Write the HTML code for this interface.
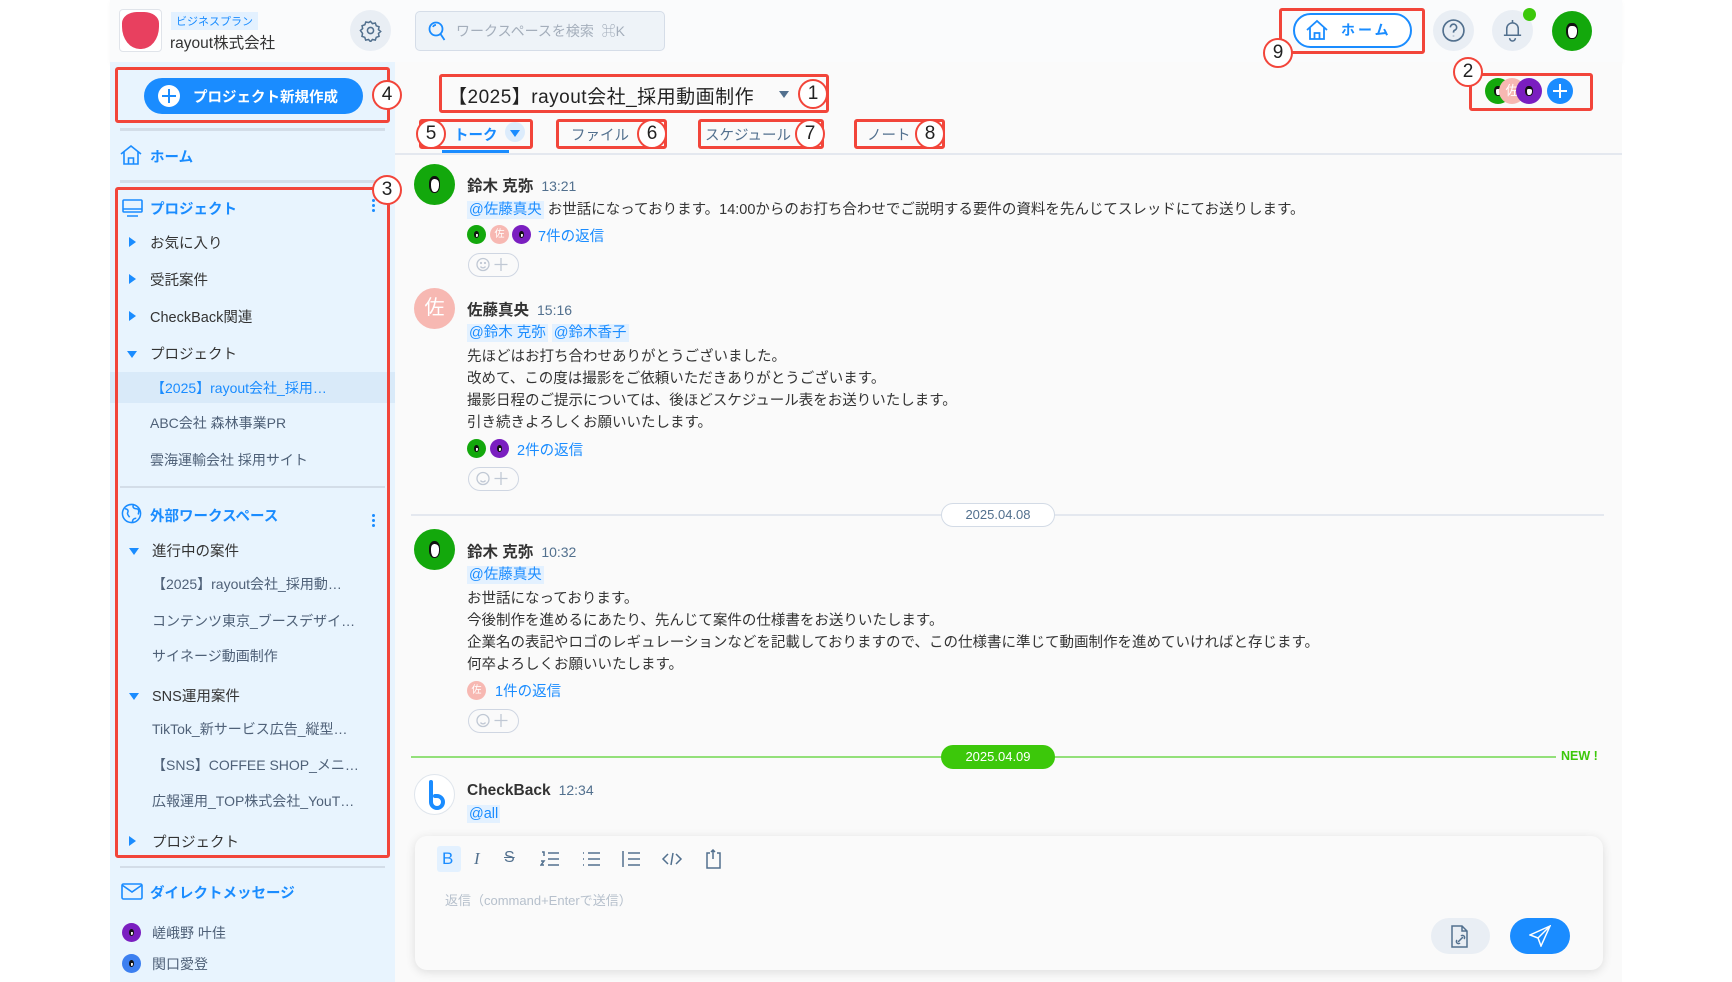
<!DOCTYPE html>
<html><head><meta charset="utf-8"><style>
*{box-sizing:border-box;margin:0;padding:0}
body{width:1732px;height:982px;background:#fff;font-family:"Liberation Sans","Noto Sans CJK JP",sans-serif;position:relative;overflow:hidden;color:#333}
.a{position:absolute;white-space:nowrap}
.red{position:absolute;border:3px solid #f2453a;border-radius:3px}
.num{position:absolute;width:30px;height:30px;border:2.5px solid #f2453a;border-radius:50%;background:#fff;font-size:19px;line-height:25px;text-align:center;color:#222}
.side{font-size:14.5px}
.grp{color:#333;font-size:14.5px}
.sub{color:#4f6178;font-size:14px}
.tri{position:absolute;width:0;height:0}
.tr{border-top:5px solid transparent;border-bottom:5px solid transparent;border-left:7px solid #1a8cff}
.td{border-left:5px solid transparent;border-right:5px solid transparent;border-top:7px solid #1a8cff}
.av{position:absolute;border-radius:50%}
.g{background:#13a80c}
.p{background:#f7b8b2;color:#fff;text-align:center}
.v{background:#7a1ec0}
.face{position:absolute;left:36%;top:30%;width:28%;height:40%;background:#fff;border-radius:45%;border:1px solid #111;border-top:3px solid #111;border-left:2px solid #111}
.name{font-weight:bold;font-size:15.5px;color:#333}
.time{font-size:14px;color:#52708e;margin-left:8px;font-weight:normal}
.txt{font-size:14.5px;color:#333}
.men{background:#e3f1ff;color:#1a8cff;padding:1px 2px}
.link{color:#1a8cff;font-size:14.5px}
.react{position:absolute;width:51px;height:24px;border:1.5px solid #cfd6e2;border-radius:12px}
.ic{position:absolute}
</style></head><body>
<div class="a" style="left:110px;top:0;width:1512px;height:62px;background:#fafbfc;box-shadow:0 2px 4px rgba(0,0,0,.04)"></div>
<div class="a" style="left:110px;top:62px;width:285px;height:920px;background:#e8f4fe"></div>
<div class="a" style="left:395px;top:62px;width:1227px;height:920px;background:#fafafa"></div>

<div class="a" style="left:119px;top:9px;width:43px;height:43px;border:1px solid #e0e4ea;border-radius:4px;background:#fff"></div>
<div class="a" style="left:122px;top:12px;width:37px;height:37px;background:#e8405f;border-radius:40% 40% 48% 48%/30% 30% 60% 60%"></div>
<div class="a" style="left:171px;top:12px;background:#e3f1ff;color:#1a8cff;font-size:11px;padding:1px 5px">ビジネスプラン</div>
<div class="a" style="left:170px;top:31px;font-size:15.5px;color:#333">rayout株式会社</div>
<div class="a" style="left:350px;top:10px;width:41px;height:41px;border-radius:50%;background:#e9eef4"></div>
<svg class="ic" style="left:359px;top:19px" width="23" height="23" viewBox="0 0 24 24" fill="none" stroke="#52708e" stroke-width="1.6"><circle cx="12" cy="12" r="3.2"/><path d="M12 2.5l2 2.3 3-.6 1 2.9 2.9 1-.6 3 2.3 2-2.3 2 .6 3-2.9 1-1 2.9-3-.6-2 2.3-2-2.3-3 .6-1-2.9-2.9-1 .6-3L1.5 12l2.3-2-.6-3 2.9-1 1-2.9 3 .6z"/></svg>
<div class="a" style="left:415px;top:11px;width:250px;height:40px;border:1px solid #d5dde8;border-radius:5px;background:#eef3f8"></div>
<svg class="ic" style="left:427px;top:20px" width="20" height="22" viewBox="0 0 20 22" fill="none" stroke="#1a8cff" stroke-width="1.8"><circle cx="9" cy="9" r="6.5"/><path d="M13.5 14l4 6"/><path d="M6 7a3 3 0 0 1 3-2"/></svg>
<div class="a" style="left:456px;top:21px;font-size:14px;color:#a4aebb">ワークスペースを検索 &nbsp;⌘K</div>

<div class="a" style="left:1293px;top:13px;width:119px;height:35px;border:2px solid #1a8cff;border-radius:18px;background:#fff"></div>
<svg class="ic" style="left:1305px;top:19px" width="24" height="22" viewBox="0 0 24 22" fill="none" stroke="#1a8cff" stroke-width="1.8"><path d="M2 11L12 2l10 9M5 8.5V20h14V8.5M9.5 20v-6h5v6"/></svg>
<div class="a" style="left:1341px;top:20px;font-size:14px;color:#1a8cff;font-weight:bold;letter-spacing:3px">ホーム</div>
<div class="red" style="left:1279px;top:8px;width:146px;height:46px"></div>
<div class="num" style="left:1263px;top:38px">9</div>
<div class="a" style="left:1433px;top:10px;width:41px;height:41px;border-radius:50%;background:#e9eef4"></div>
<svg class="ic" style="left:1441px;top:18px" width="25" height="25" viewBox="0 0 24 24" fill="none" stroke="#52708e" stroke-width="1.6"><circle cx="12" cy="12" r="10"/><path d="M9 9a3 3 0 1 1 4 2.8c-1 .4-1 1.2-1 2.2M12 17v.5"/></svg>
<div class="a" style="left:1492px;top:10px;width:41px;height:41px;border-radius:50%;background:#e9eef4"></div>
<svg class="ic" style="left:1501px;top:18px" width="23" height="25" viewBox="0 0 24 26" fill="none" stroke="#52708e" stroke-width="1.6"><path d="M6 18V11a6 6 0 0 1 12 0v7M3 18h18M12 2v3M9 21a3 3 0 0 0 6 0"/></svg>
<div class="a" style="left:1523px;top:8px;width:13px;height:13px;border-radius:50%;background:#3cc80a"></div>
<div class="av g" style="left:1552px;top:11px;width:40px;height:40px"><div class="face"></div></div>

<div class="a" style="left:144px;top:78px;width:219px;height:36px;border-radius:18px;background:#1a8cff"></div>
<div class="a" style="left:158px;top:85px;width:22px;height:22px;border-radius:50%;background:#fff"></div>
<div class="a" style="left:168px;top:89px;width:2px;height:14px;background:#1a8cff"></div>
<div class="a" style="left:162px;top:95px;width:14px;height:2px;background:#1a8cff"></div>
<div class="a" style="left:193px;top:86px;font-size:14.5px;color:#fff;font-weight:bold">プロジェクト新規作成</div>
<div class="red" style="left:115px;top:67px;width:275px;height:56px"></div>
<div class="num" style="left:372px;top:80px">4</div>
<div class="a" style="left:120px;top:128px;width:265px;height:3px;background:#d3dde8"></div>
<svg class="ic" style="left:120px;top:145px" width="22" height="20" viewBox="0 0 22 20" fill="none" stroke="#1a8cff" stroke-width="1.6"><path d="M1 9l10-8 10 8M4 7v12h14V7M8.5 19v-6h5v6"/></svg>
<div class="a side" style="left:150px;top:146px;color:#1a8cff;font-weight:bold">ホーム</div>
<div class="a" style="left:120px;top:180px;width:265px;height:3px;background:#d3dde8"></div>

<svg class="ic" style="left:122px;top:199px" width="21" height="18" viewBox="0 0 21 18" fill="none" stroke="#1a8cff" stroke-width="1.6"><rect x="1" y="1" width="19" height="12" rx="1"/><path d="M1 10h19M5 17h11"/></svg>
<div class="a side" style="left:150px;top:198px;color:#1a8cff;font-weight:bold">プロジェクト</div>
<div class="a" style="left:372px;top:199px;width:3px;height:3px;background:#1a8cff;border-radius:50%;box-shadow:0 5px #1a8cff,0 10px #1a8cff"></div>
<div class="tri tr" style="left:129px;top:237px"></div><div class="a grp" style="left:150px;top:232px">お気に入り</div>
<div class="tri tr" style="left:129px;top:274px"></div><div class="a grp" style="left:150px;top:269px">受託案件</div>
<div class="tri tr" style="left:129px;top:311px"></div><div class="a grp" style="left:150px;top:306px">CheckBack関連</div>
<div class="tri td" style="left:127px;top:351px"></div><div class="a grp" style="left:150px;top:343px">プロジェクト</div>
<div class="a" style="left:110px;top:372px;width:285px;height:31px;background:#d9eaf9"></div>
<div class="a sub" style="left:151px;top:378px;color:#1a8cff">【2025】rayout会社_採用…</div>
<div class="a sub" style="left:150px;top:413px">ABC会社 森林事業PR</div>
<div class="a sub" style="left:150px;top:450px">雲海運輸会社 採用サイト</div>
<div class="a" style="left:120px;top:486px;width:265px;height:2px;background:#d3dde8"></div>
<svg class="ic" style="left:121px;top:503px" width="21" height="21" viewBox="0 0 22 22" fill="none" stroke="#1a8cff" stroke-width="1.6"><circle cx="11" cy="11" r="9.5"/><path d="M4 6c3 0 4 2 3 4s1 3 2 5M13 2c-1 2 0 4 3 4s3 3 2 6M12 20c0-3 2-4 4-4"/></svg>
<div class="a side" style="left:150px;top:505px;color:#1a8cff;font-weight:bold">外部ワークスペース</div>
<div class="a" style="left:372px;top:514px;width:3px;height:3px;background:#1a8cff;border-radius:50%;box-shadow:0 5px #1a8cff,0 10px #1a8cff"></div>
<div class="tri td" style="left:129px;top:548px"></div><div class="a grp" style="left:152px;top:540px">進行中の案件</div>
<div class="a sub" style="left:152px;top:574px">【2025】rayout会社_採用動…</div>
<div class="a sub" style="left:152px;top:611px">コンテンツ東京_ブースデザイ…</div>
<div class="a sub" style="left:152px;top:646px">サイネージ動画制作</div>
<div class="tri td" style="left:129px;top:693px"></div><div class="a grp" style="left:152px;top:685px">SNS運用案件</div>
<div class="a sub" style="left:152px;top:719px">TikTok_新サービス広告_縦型…</div>
<div class="a sub" style="left:152px;top:755px">【SNS】COFFEE SHOP_メニ…</div>
<div class="a sub" style="left:152px;top:791px">広報運用_TOP株式会社_YouT…</div>
<div class="tri tr" style="left:129px;top:836px"></div><div class="a grp" style="left:152px;top:831px">プロジェクト</div>
<div class="red" style="left:115px;top:187px;width:275px;height:671px"></div>
<div class="num" style="left:372px;top:175px">3</div>
<div class="a" style="left:120px;top:866px;width:265px;height:2px;background:#d3dde8"></div>
<svg class="ic" style="left:121px;top:883px" width="22" height="17" viewBox="0 0 22 17" fill="none" stroke="#1a8cff" stroke-width="1.6"><rect x="1" y="1" width="20" height="15" rx="1.5"/><path d="M1 2l10 7 10-7"/></svg>
<div class="a side" style="left:150px;top:882px;color:#1a8cff;font-weight:bold">ダイレクトメッセージ</div>
<div class="av v" style="left:122px;top:923px;width:19px;height:19px"><div class="face"></div></div>
<div class="a sub" style="left:152px;top:923px;color:#4f6178">嵯峨野 叶佳</div>
<div class="av" style="left:122px;top:954px;width:19px;height:19px;background:#3c7ff0"><div class="face"></div></div>
<div class="a sub" style="left:152px;top:954px;color:#4f6178">関口愛登</div>

<div class="a" style="left:448px;top:82px;font-size:19px;color:#222;letter-spacing:.5px">【2025】rayout会社_採用動画制作</div>
<div class="tri" style="left:779px;top:91px;border-left:5px solid transparent;border-right:5px solid transparent;border-top:7px solid #52708e"></div>
<div class="red" style="left:439px;top:74px;width:390px;height:39px"></div>
<div class="num" style="left:798px;top:79px">1</div>
<div class="av g" style="left:1485px;top:78px;width:26px;height:26px"><div class="face"></div></div>
<div class="av p" style="left:1499px;top:78px;width:26px;height:26px;font-size:13px;line-height:26px">佐</div>
<div class="av v" style="left:1516px;top:78px;width:26px;height:26px"><div class="face"></div></div>
<div class="av" style="left:1547px;top:78px;width:26px;height:26px;background:#1a8cff"></div>
<div class="a" style="left:1559px;top:84px;width:2px;height:14px;background:#fff"></div>
<div class="a" style="left:1553px;top:90px;width:14px;height:2px;background:#fff"></div>
<div class="red" style="left:1469px;top:73px;width:124px;height:38px"></div>
<div class="num" style="left:1453px;top:57px">2</div>

<div class="a" style="left:395px;top:153px;width:1227px;height:2px;background:#e4e8ef"></div>
<div class="a" style="left:442px;top:150px;width:67px;height:3px;background:#1a8cff"></div>
<div class="a" style="left:454px;top:124px;font-size:14.5px;color:#1a8cff;font-weight:bold">トーク</div>
<div class="a" style="left:505px;top:122px;width:20px;height:20px;border-radius:50%;background:#dcecfc"></div>
<div class="tri" style="left:510px;top:130px;border-left:5px solid transparent;border-right:5px solid transparent;border-top:7px solid #1a8cff"></div>
<div class="red" style="left:419px;top:119px;width:114px;height:30px"></div>
<div class="num" style="left:416px;top:119px">5</div>
<div class="a" style="left:571px;top:124px;font-size:14.5px;color:#52708e">ファイル</div>
<div class="red" style="left:556px;top:119px;width:111px;height:30px"></div>
<div class="num" style="left:637px;top:119px">6</div>
<div class="a" style="left:705px;top:124px;font-size:14.5px;color:#52708e">スケジュール</div>
<div class="red" style="left:698px;top:119px;width:126px;height:30px"></div>
<div class="num" style="left:795px;top:119px">7</div>
<div class="a" style="left:867px;top:124px;font-size:14.5px;color:#52708e">ノート</div>
<div class="red" style="left:854px;top:119px;width:91px;height:30px"></div>
<div class="num" style="left:915px;top:119px">8</div>

<div class="av g" style="left:414px;top:164px;width:41px;height:41px"><div class="face"></div></div>
<div class="a name" style="left:467px;top:174px">鈴木 克弥<span class="time">13:21</span></div>
<div class="a txt" style="left:467px;top:198px"><span class="men">@佐藤真央</span> お世話になっております。14:00からのお打ち合わせでご説明する要件の資料を先んじてスレッドにてお送りします。</div>
<div class="av g" style="left:467px;top:225px;width:19px;height:19px"><div class="face"></div></div>
<div class="av p" style="left:490px;top:225px;width:19px;height:19px;font-size:10px;line-height:19px">佐</div>
<div class="av v" style="left:512px;top:225px;width:19px;height:19px"><div class="face"></div></div>
<div class="a link" style="left:538px;top:225px">7件の返信</div>
<div class="react" style="left:468px;top:253px"><svg width="48" height="21" viewBox="0 0 48 21" fill="none" stroke="#c0c8d4" stroke-width="1.3"><circle cx="14" cy="10.5" r="6"/><path d="M11.5 12.5a3 3 0 0 0 5 0"/><circle cx="12" cy="9" r=".5"/><circle cx="16" cy="9" r=".5"/><path d="M32 4v13M25.5 10.5h13"/></svg></div>

<div class="av p" style="left:414px;top:288px;width:41px;height:41px;font-size:20px;line-height:41px">佐</div>
<div class="a name" style="left:467px;top:298px">佐藤真央<span class="time">15:16</span></div>
<div class="a txt" style="left:467px;top:321px"><span class="men">@鈴木 克弥</span> <span class="men">@鈴木香子</span></div>
<div class="a txt" style="left:467px;top:346px;line-height:22px">先ほどはお打ち合わせありがとうございました。<br>改めて、この度は撮影をご依頼いただきありがとうございます。<br>撮影日程のご提示については、後ほどスケジュール表をお送りいたします。<br>引き続きよろしくお願いいたします。</div>
<div class="av g" style="left:467px;top:439px;width:19px;height:19px"><div class="face"></div></div>
<div class="av v" style="left:490px;top:439px;width:19px;height:19px"><div class="face"></div></div>
<div class="a link" style="left:517px;top:439px">2件の返信</div>
<div class="react" style="left:468px;top:467px"><svg width="48" height="21" viewBox="0 0 48 21" fill="none" stroke="#c0c8d4" stroke-width="1.3"><circle cx="14" cy="10.5" r="6"/><path d="M11.5 12.5a3 3 0 0 0 5 0"/><path d="M32 4v13M25.5 10.5h13"/></svg></div>

<div class="a" style="left:411px;top:514px;width:1193px;height:2px;background:#e4e8ef"></div>
<div class="a" style="left:941px;top:503px;width:114px;height:24px;border:1.5px solid #d3dbe6;border-radius:12px;background:#fff;font-size:13px;color:#52708e;text-align:center;line-height:21px">2025.04.08</div>

<div class="av g" style="left:414px;top:529px;width:41px;height:41px"><div class="face"></div></div>
<div class="a name" style="left:467px;top:540px">鈴木 克弥<span class="time">10:32</span></div>
<div class="a txt" style="left:467px;top:563px"><span class="men">@佐藤真央</span></div>
<div class="a txt" style="left:467px;top:588px;line-height:22px">お世話になっております。<br>今後制作を進めるにあたり、先んじて案件の仕様書をお送りいたします。<br>企業名の表記やロゴのレギュレーションなどを記載しておりますので、この仕様書に準じて動画制作を進めていければと存じます。<br>何卒よろしくお願いいたします。</div>
<div class="av p" style="left:467px;top:681px;width:19px;height:19px;font-size:10px;line-height:19px">佐</div>
<div class="a link" style="left:495px;top:680px">1件の返信</div>
<div class="react" style="left:468px;top:709px"><svg width="48" height="21" viewBox="0 0 48 21" fill="none" stroke="#c0c8d4" stroke-width="1.3"><circle cx="14" cy="10.5" r="6"/><path d="M11.5 12.5a3 3 0 0 0 5 0"/><path d="M32 4v13M25.5 10.5h13"/></svg></div>

<div class="a" style="left:411px;top:756px;width:1145px;height:2px;background:#93e07a"></div>
<div class="a" style="left:941px;top:745px;width:114px;height:24px;border-radius:12px;background:#3cc80a;font-size:13px;color:#fff;text-align:center;line-height:24px">2025.04.09</div>
<div class="a" style="left:1561px;top:749px;font-size:12.5px;color:#3cc80a;font-weight:bold">NEW !</div>

<div class="av" style="left:414px;top:774px;width:41px;height:41px;background:#fff;border:1px solid #dfe5ec"></div>
<svg class="ic" style="left:423px;top:779px" width="24" height="32" viewBox="0 0 24 32" fill="none" stroke="#1a8cff" stroke-width="4" stroke-linecap="round"><path d="M8 3v20a6 6 0 1 0 6-6h-2"/></svg>
<div class="a name" style="left:467px;top:782px">CheckBack<span class="time">12:34</span></div>
<div class="a txt" style="left:467px;top:806px"><span class="men">@all</span></div>

<div class="a" style="left:415px;top:836px;width:1188px;height:134px;background:#fafafa;border-radius:12px;box-shadow:0 2px 10px rgba(0,0,0,.12)"></div>
<div class="a" style="left:437px;top:846px;width:24px;height:26px;background:#e3f1ff;border-radius:3px"></div>
<div class="a" style="left:442px;top:849px;font-size:17px;color:#1a8cff">B</div>
<div class="a" style="left:474px;top:849px;font-size:17px;color:#52708e;font-style:italic;font-family:'Liberation Serif',serif">I</div>
<div class="a" style="left:504px;top:849px;font-size:16px;color:#52708e;text-decoration:line-through">S</div>
<svg class="ic" style="left:540px;top:850px" width="20" height="18" viewBox="0 0 20 18" fill="none" stroke="#52708e" stroke-width="1.5"><path d="M8 3h11M8 9h11M8 15h11M2 2h2v4M1 11h3l-3 4h3"/></svg>
<svg class="ic" style="left:581px;top:850px" width="20" height="18" viewBox="0 0 20 18" fill="none" stroke="#52708e" stroke-width="1.5"><path d="M7 3h12M7 9h12M7 15h12M2 3h1M2 9h1M2 15h1"/></svg>
<svg class="ic" style="left:621px;top:850px" width="20" height="18" viewBox="0 0 20 18" fill="none" stroke="#52708e" stroke-width="1.5"><path d="M2 1v16M7 3h12M7 9h12M7 15h12"/></svg>
<svg class="ic" style="left:661px;top:850px" width="22" height="18" viewBox="0 0 22 18" fill="none" stroke="#52708e" stroke-width="1.5"><path d="M7 4L2 9l5 5M15 4l5 5-5 5M12 3l-2 12"/></svg>
<svg class="ic" style="left:705px;top:849px" width="18" height="20" viewBox="0 0 18 20" fill="none" stroke="#52708e" stroke-width="1.5"><path d="M5 4H2v15h13V4h-3M8 1v9M6 3l2-2 2 2"/></svg>
<div class="a" style="left:445px;top:890px;font-size:13px;color:#b6c0cc">返信（command+Enterで送信）</div>
<div class="a" style="left:1431px;top:918px;width:59px;height:36px;border-radius:18px;background:#e9eef4"></div>
<svg class="ic" style="left:1450px;top:925px" width="20" height="23" viewBox="0 0 20 23" fill="none" stroke="#52708e" stroke-width="1.5"><path d="M12 1H2v21h15V6zM12 1v5h5M8 17l5-5M10 18a2 2 0 0 1-3-3M11 11a2 2 0 0 1 3 3"/></svg>
<div class="a" style="left:1510px;top:918px;width:60px;height:36px;border-radius:18px;background:#1a8cff"></div>
<svg class="ic" style="left:1529px;top:925px" width="22" height="22" viewBox="0 0 22 22" fill="none" stroke="#fff" stroke-width="1.5"><path d="M21 1L1 10l8 3 3 8zM21 1L9 13"/></svg>
</body></html>
